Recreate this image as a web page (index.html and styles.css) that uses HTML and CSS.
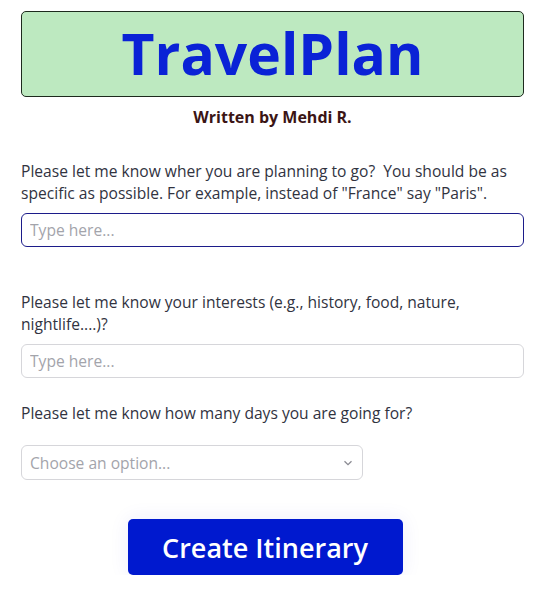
FILE: index.html
```html
<!DOCTYPE html>
<html>
<head>
<meta charset="utf-8">
<link rel="stylesheet" href="styles.css">
</head>
<body>
<main class="page">
  <header class="banner"><h1 class="title">TravelPlan</h1></header>
  <p class="byline">Written by Mehdi R.</p>

  <label class="label first">Please let me know wher you are planning to go?&nbsp; You should be as specific as possible. For example, instead of "France" say "Paris".</label>
  <input class="field focused" type="text" placeholder="Type here...">

  <label class="label second">Please let me know your interests (e.g., history, food, nature, nightlife....)?</label>
  <input class="field" type="text" placeholder="Type here...">

  <label class="label third">Please let me know how many days you are going for?</label>
  <div class="select">
    <span class="select-text">Choose an option...</span>
    <svg class="chev" width="10" height="6" viewBox="0 0 10 6"><path d="M1.5 1.2 L5 4.6 L8.5 1.2" fill="none" stroke="#8a8a92" stroke-width="1.3"/></svg>
  </div>

  <div class="actions"><button class="btn">Create Itinerary</button></div>
</main>
</body>
</html>
```
FILE: styles.css
```css
* { box-sizing: border-box; }
html, body { margin: 0; padding: 0; background: #fff; }
body { font-family: "Open Sans", "Liberation Sans", sans-serif; color: #31333f; }
.page { padding: 11px 21px 0 21px; display: flex; flex-direction: column; }
.banner {
  height: 86px;
  background: #bde9c0;
  border: 1px solid #1e2a1e;
  border-radius: 5px;
  display: flex; align-items: center; justify-content: center;
}
.title {
  margin: 0;
  font-size: 57px;
  font-weight: 700;
  color: #0a22d6;
  line-height: 1;
  position: relative; top: -1px;
}
.byline {
  margin: 10px 0 0 0;
  text-align: center;
  font-weight: 700;
  font-size: 16px;
  line-height: 20px;
  color: #3b1515;
}
.label {
  display: block;
  font-size: 15.6px;
  line-height: 22px;
  color: #31333f;
}
.label.first { margin-top: 33px; }
.label.second { margin-top: 44px; }
.label.third { margin-top: 24px; }
.field {
  display: block;
  width: 100%;
  height: 34px;
  margin-top: 9px;
  border: 1px solid #d6d6da;
  border-radius: 6px;
  padding: 0 8px;
  font-family: inherit;
  font-size: 15.6px;
  color: #31333f;
  background: #fff;
  outline: none;
}
.field.focused { border-color: #1c1c8a; }
.field::placeholder { color: #a3a4ab; }
.select {
  margin-top: 21px;
  width: 342px;
  height: 35px;
  border: 1px solid #d6d6da;
  border-radius: 6px;
  display: flex; align-items: center; justify-content: space-between;
  padding: 0 8px 0 8px;
}
.select-text { font-size: 15.6px; color: #a3a4ab; }
.chev { margin-right: 1px; }
.actions { display: flex; justify-content: center; padding-right: 15px; margin-top: 39px; }
.btn {
  width: 275px; height: 56px;
  background: #0019cf;
  color: #fff;
  border: none;
  border-radius: 5px;
  font-family: inherit;
  font-size: 27px;
  font-weight: 600;
  box-shadow: 0 0 20px rgba(40, 40, 200, 0.08);
}
```
